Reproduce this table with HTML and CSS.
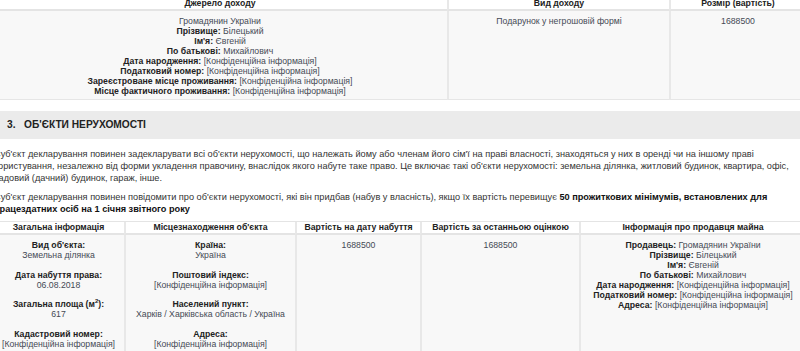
FILE: index.html
```html
<!DOCTYPE html>
<html lang="uk">
<head>
<meta charset="utf-8">
<title>Декларація</title>
<link rel="stylesheet" href="styles.css">
</head>
<body>
<div class="page">
  <div class="grid income">
    <div class="th">Джерело доходу</div>
    <div class="th">Вид доходу</div>
    <div class="th">Розмір (вартість)</div>
    <div class="td">
      <div class="v">Громадянин України</div>
      <div><b>Прізвище:</b> <span class="v">Білецький</span></div>
      <div><b>Ім'я:</b> <span class="v">Євгеній</span></div>
      <div><b>По батькові:</b> <span class="v">Михайлович</span></div>
      <div><b>Дата народження:</b> <span class="v">[Конфіденційна інформація]</span></div>
      <div><b>Податковий номер:</b> <span class="v">[Конфіденційна інформація]</span></div>
      <div><b>Зареєстроване місце проживання:</b> <span class="v">[Конфіденційна інформація]</span></div>
      <div><b>Місце фактичного проживання:</b> <span class="v">[Конфіденційна інформація]</span></div>
    </div>
    <div class="td"><span class="v">Подарунок у негрошовій формі</span></div>
    <div class="td"><span class="v">1688500</span></div>
  </div>

  <h2 class="section"><span class="num">3.</span>ОБ'ЄКТИ НЕРУХОМОСТІ</h2>

  <p class="note">Суб'єкт декларування повинен задекларувати всі об'єкти нерухомості, що належать йому або членам його сім'ї на праві власності, знаходяться у них в оренді чи на іншому праві користування, незалежно від форми укладення правочину, внаслідок якого набуте таке право. Це включає такі об'єкти нерухомості: земельна ділянка, житловий будинок, квартира, офіс, садовий (дачний) будинок, гараж, інше.</p>
  <p class="note">Суб'єкт декларування повинен повідомити про об'єкти нерухомості, які він придбав (набув у власність), якщо їх вартість перевищує <b>50 прожиткових мінімумів, встановлених для працездатних осіб на 1 січня звітного року</b></p>

  <div class="grid estate">
    <div class="th">Загальна інформація</div>
    <div class="th">Місцезнаходження об'єкта</div>
    <div class="th">Вартість на дату набуття</div>
    <div class="th">Вартість за останньою оцінкою</div>
    <div class="th">Інформація про продавця майна</div>
    <div class="td groups">
      <div class="grp"><b>Вид об'єкта:</b><span class="v">Земельна ділянка</span></div>
      <div class="grp"><b>Дата набуття права:</b><span class="v">06.08.2018</span></div>
      <div class="grp"><b>Загальна площа (м<sup>2</sup>):</b><span class="v">617</span></div>
      <div class="grp"><b>Кадастровий номер:</b><span class="v">[Конфіденційна інформація]</span></div>
    </div>
    <div class="td groups">
      <div class="grp"><b>Країна:</b><span class="v">Україна</span></div>
      <div class="grp"><b>Поштовий індекс:</b><span class="v">[Конфіденційна інформація]</span></div>
      <div class="grp"><b>Населений пункт:</b><span class="v">Харків / Харківська область / Україна</span></div>
      <div class="grp"><b>Адреса:</b><span class="v">[Конфіденційна інформація]</span></div>
    </div>
    <div class="td"><span class="v">1688500</span></div>
    <div class="td"><span class="v">1688500</span></div>
    <div class="td">
      <div><b>Продавець:</b> <span class="v">Громадянин України</span></div>
      <div><b>Прізвище:</b> <span class="v">Білецький</span></div>
      <div><b>Ім'я:</b> <span class="v">Євгеній</span></div>
      <div><b>По батькові:</b> <span class="v">Михайлович</span></div>
      <div><b>Дата народження:</b> <span class="v">[Конфіденційна інформація]</span></div>
      <div><b>Податковий номер:</b> <span class="v">[Конфіденційна інформація]</span></div>
      <div><b>Адреса:</b> <span class="v">[Конфіденційна інформація]</span></div>
    </div>
  </div>
</div>
</body>
</html>
```

FILE: styles.css
```css
html, body {
  margin: 0;
  padding: 0;
  background: #ffffff;
  overflow: hidden;
}
body {
  font-family: "Liberation Sans", Arial, sans-serif;
  font-size: 8.7px;
  color: #333333;
}
.page {
  width: 812px;
  margin: -3px 0 0 -7px;
}
.grid {
  display: grid;
  border-top: 1px solid #e4e4e4;
}
.income {
  grid-template-columns: 454px 222px 136px;
}
.estate {
  grid-template-columns: 131px 171px 125px 159px 226px;
  margin-top: 6px;
}
.th, .td {
  box-sizing: border-box;
  text-align: center;
  border-left: 2px solid #e8e8e8;
}
.th:first-child, .income .td:nth-child(4), .estate .td:nth-child(6) {
  border-left: none;
}
.th {
  font-weight: bold;
  color: #222222;
  line-height: 11px;
  border-bottom: 2px solid #e4e4e4;
  white-space: nowrap;
}
.td {
  background: #f8f8f8;
  line-height: 10px;
  padding: 4.5px 0 3.5px;
  border-bottom: 1px solid #e6e6e6;
}
.estate .td {
  padding: 5px 0 20px;
  white-space: nowrap;
}
b {
  color: #222222;
}
.v {
  color: #454a55;
}
.grp {
  display: flex;
  flex-direction: column;
  margin-bottom: 9.5px;
}
sup {
  font-size: 6px;
  line-height: 0;
}
.section {
  margin: 11px 0 0;
  height: 28px;
  background: #ebebeb;
  font-size: 10.2px;
  font-weight: bold;
  color: #222222;
  line-height: 28px;
  padding-left: 14px;
}
.num {
  display: inline-block;
  width: 17px;
}
.note {
  margin: 9px 0 0;
  padding-left: 1px;
  padding-right: 6px;
  font-size: 9.2px;
  line-height: 12px;
  color: #333333;
}
.note + .note {
  margin-top: 7px;
}
.note b {
  color: #111111;
}
```
